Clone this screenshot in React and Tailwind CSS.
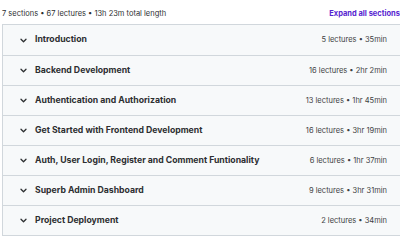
const sections = [
  { title: "Introduction", meta: "5 lectures • 35min" },
  { title: "Backend Development", meta: "16 lectures • 2hr 2min" },
  { title: "Authentication and Authorization", meta: "13 lectures • 1hr 45min" },
  { title: "Get Started with Frontend Development", meta: "16 lectures • 3hr 19min" },
  { title: "Auth, User Login, Register and Comment Funtionality", meta: "6 lectures • 1hr 37min" },
  { title: "Superb Admin Dashboard", meta: "9 lectures • 3hr 31min" },
  { title: "Project Deployment", meta: "2 lectures • 34min" },
];

function Chevron() {
  return (
    <svg width="7" height="5" viewBox="0 0 7 5" fill="none" stroke="#2d2f31" strokeWidth="1.3" strokeLinecap="round" strokeLinejoin="round">
      <path d="M1 1.2l2.5 2.5L6 1.2" />
    </svg>
  );
}

export default function App() {
  return (
    <div className="w-[400px] h-[241px] overflow-hidden bg-white" style={{ fontFamily: "Inter, 'Noto Sans', sans-serif" }}>
      <div className="w-[400px] pl-[2px] pt-[7px]">
        <div className="w-[398px] flex items-center justify-between h-[14px] mb-[3px]">
          <span className="text-[7.5px] text-[#2d2f31]">7 sections • 67 lectures • 13h 23m total length</span>
          <span className="text-[7.5px] font-bold text-[#5624d0] whitespace-nowrap">Expand all sections</span>
        </div>
        <div className="w-[400px] border border-[#d1d7dc]">
          {sections.map((s, i) => (
            <div
              key={s.title}
              className={`flex items-center h-[30px] bg-[#f7f9fa] pl-[17px] pr-[14px] ${i > 0 ? "border-t border-[#d1d7dc]" : ""}`}
            >
              <Chevron />
              <span className="ml-[8px] text-[8.7px] font-bold text-[#2d2f31] flex-1 whitespace-nowrap">{s.title}</span>
              <span className="text-[7.5px] text-[#3e4143] whitespace-nowrap">{s.meta}</span>
            </div>
          ))}
        </div>
      </div>
    </div>
  );
}
